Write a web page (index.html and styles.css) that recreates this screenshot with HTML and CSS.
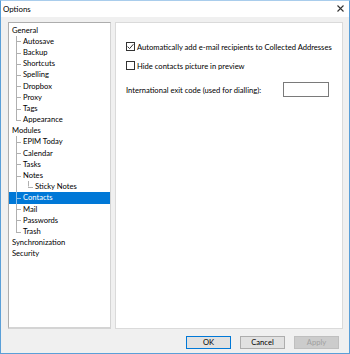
FILE: index.html
```html
<!DOCTYPE html>
<html>
<head>
<meta charset="utf-8">
<link rel="stylesheet" href="styles.css">
</head>
<body>
<div class="window">
  <div class="titlebar">
    <span class="title">Options</span>
    <svg class="close" width="7" height="7" viewBox="0 0 7 7"><path d="M0.5 0.5L6.5 6.5M6.5 0.5L0.5 6.5" stroke="#333" stroke-width="1.1"/></svg>
  </div>
  <div class="main">
    <div class="panes">
      <div class="tree">
        <div class="row">General</div>
        <div class="row l1">Autosave</div>
        <div class="row l1">Backup</div>
        <div class="row l1">Shortcuts</div>
        <div class="row l1">Spelling</div>
        <div class="row l1">Dropbox</div>
        <div class="row l1">Proxy</div>
        <div class="row l1">Tags</div>
        <div class="row l1 last">Appearance</div>
        <div class="row">Modules</div>
        <div class="row l1">EPIM Today</div>
        <div class="row l1">Calendar</div>
        <div class="row l1">Tasks</div>
        <div class="row l1">Notes</div>
        <div class="row l2">Sticky Notes</div>
        <div class="row l1 selected">Contacts</div>
        <div class="row l1">Mail</div>
        <div class="row l1">Passwords</div>
        <div class="row l1 last">Trash</div>
        <div class="row">Synchronization</div>
        <div class="row">Security</div>
      </div>
      <div class="content">
        <label class="check-row">
          <span class="box checked"><svg width="7" height="7" viewBox="0 0 7 7"><path d="M0.6 3.6L2.6 5.6L6.4 1.2" fill="none" stroke="#333" stroke-width="1"/></svg></span>
          <span>Automatically add e-mail recipients to Collected Addresses</span>
        </label>
        <label class="check-row">
          <span class="box"></span>
          <span>Hide contacts picture in preview</span>
        </label>
        <div class="field-row">
          <span>International exit code (used for dialling):</span>
          <span class="input"></span>
        </div>
      </div>
    </div>
    <div class="footer">
      <div class="btn default">OK</div>
      <div class="btn">Cancel</div>
      <div class="btn disabled">Apply</div>
    </div>
  </div>
</div>
</body>
</html>
```
FILE: styles.css
```css
html, body {
  margin: 0;
  padding: 0;
}
body {
  width: 350px;
  height: 354px;
  font-family: Lato, "Liberation Sans", sans-serif;
  font-size: 7.6px;
  color: #000;
}
.window {
  box-sizing: border-box;
  width: 350px;
  height: 354px;
  border: 1px solid #5a9fd8;
  border-top-color: #a9cdec;
  display: flex;
  flex-direction: column;
  background: #f0f0f0;
}
.titlebar {
  height: 16px;
  background: #fff;
  display: flex;
  align-items: center;
  justify-content: space-between;
  padding: 0 5px 0 2px;
  flex: none;
}
.title {
  font-size: 7.9px;
}
.close {
  margin-top: -1px;
}
.main {
  flex: 1;
  display: flex;
  flex-direction: column;
  padding: 5px 6px 0 7px;
}
.panes {
  display: flex;
  gap: 4px;
  height: 307px;
}
.tree {
  box-sizing: border-box;
  flex: none;
  width: 103px;
  height: 307px;
  background: #fff;
  border: 1px solid #adadad;
  border-right-color: #d4d4d4;
  border-bottom: 2px solid #d4d4d4;
  padding-top: 1.6px;
}
.row {
  position: relative;
  height: 11.2px;
  line-height: 11.2px;
  padding-left: 3px;
  white-space: nowrap;
}
.row.l1 {
  padding-left: 14px;
}
.row.l1::before,
.row.l2::before {
  content: "";
  position: absolute;
  left: 7px;
  top: 0;
  bottom: 0;
  border-left: 1px solid #b0b0b0;
}
.row.l1.last::before {
  bottom: 50%;
}
.row.l1::after,
.row.l2::after {
  content: "";
  position: absolute;
  left: 7px;
  top: 50%;
  width: 5px;
  border-top: 1px solid #b0b0b0;
}
.row.l2 {
  padding-left: 26px;
  background: linear-gradient(#b0b0b0, #b0b0b0) no-repeat 19px 0 / 1px 50%;
}
.row.l2::after {
  left: 19px;
}
.row.selected {
  background: #0078d7;
  color: #fff;
}
.row.selected::before,
.row.selected::after {
  border-color: #8fc1ea;
}
.content {
  flex: 1;
  min-width: 0;
  background: #fff;
  border: 1px solid #dadada;
  padding: 19px 0 0 10px;
  display: flex;
  flex-direction: column;
}
.check-row {
  display: flex;
  align-items: center;
  gap: 2px;
  height: 9px;
  margin-bottom: 10px;
  white-space: nowrap;
}
.box {
  box-sizing: border-box;
  width: 9px;
  height: 9px;
  border: 1px solid #333;
  background: #fff;
  display: flex;
  align-items: center;
  justify-content: center;
  flex: none;
}
.field-row {
  display: flex;
  align-items: center;
  justify-content: space-between;
  margin-top: 2px;
  width: 203px;
  white-space: nowrap;
}
.input {
  box-sizing: border-box;
  width: 46px;
  height: 15px;
  border: 1px solid #7a7a7a;
  background: #fff;
}
.footer {
  display: flex;
  justify-content: flex-end;
  gap: 9px;
  padding: 7px 4px 0 0;
}
.btn {
  box-sizing: border-box;
  width: 45px;
  height: 13px;
  line-height: 11px;
  text-align: center;
  background: #e1e1e1;
  border: 1px solid #adadad;
}
.btn.default {
  border-color: #0078d7;
}
.btn.disabled {
  background: #cccccc;
  border-color: #bfbfbf;
  color: #a0a0a0;
}
```
